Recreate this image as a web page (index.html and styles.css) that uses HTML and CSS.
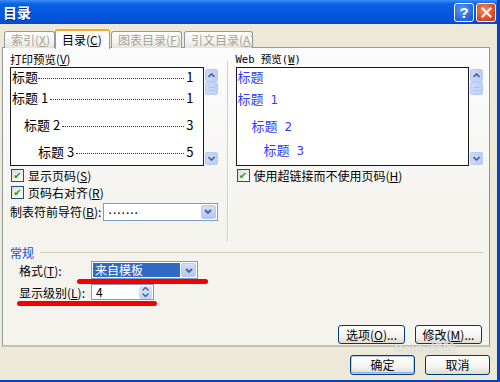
FILE: index.html
```html
<!DOCTYPE html>
<html lang="zh-CN">
<head>
  <meta charset="UTF-8">
  <title>目录</title>
  <link rel="stylesheet" href="styles.css">
</head>
<body>
  <div class="ventana">
    <div class="titulo">
      <span class="titulo-texto">目录</span>
      <div class="botones-titulo">
        <span class="btn-cap ayuda">?</span>
        <span class="btn-cap cerrar">
          <svg width="11" height="11" viewBox="0 0 11 11"><path d="M1.5 1.5 L9.5 9.5 M9.5 1.5 L1.5 9.5" stroke="#fff" stroke-width="2.2" stroke-linecap="square"/></svg>
        </span>
      </div>
    </div>

    <div class="cliente">
      <div class="pestanas">
        <span class="pestana">索引(<u>X</u>)</span>
        <span class="pestana activa">目录(<u>C</u>)</span>
        <span class="pestana">图表目录(<u>F</u>)</span>
        <span class="pestana">引文目录(<u>A</u>)</span>
      </div>

      <div class="panel">
        <div class="columnas">
          <div class="col izq">
            <div class="etiqueta">打印预览(<u>V</u>)</div>
            <div class="vista">
              <div class="caja impresion">
                <div class="linea n0"><span>标题</span><i></i><span>1</span></div>
                <div class="linea n1"><span>标题 1</span><i></i><span>1</span></div>
                <div class="linea n2"><span>标题 2</span><i></i><span>3</span></div>
                <div class="linea n3"><span>标题 3</span><i></i><span>5</span></div>
              </div>
              <div class="scroll">
                <span class="flecha"><svg width="7" height="5" viewBox="0 0 7 5"><path d="M0.5 4 L3.5 1 L6.5 4" fill="none" stroke="#4d6185" stroke-width="1.6"/></svg></span>
                <span class="pulgar"></span>
                <span class="hueco"></span>
                <span class="flecha"><svg width="7" height="5" viewBox="0 0 7 5"><path d="M0.5 1 L3.5 4 L6.5 1" fill="none" stroke="#4d6185" stroke-width="1.6"/></svg></span>
              </div>
            </div>
            <label class="check"><span class="cuadro">✔</span><span>显示页码(<u>S</u>)</span></label>
            <label class="check"><span class="cuadro">✔</span><span>页码右对齐(<u>R</u>)</span></label>
            <div class="fila-guia">
              <span>制表符前导符(<u>B</u>):</span>
              <div class="combo guia">
                <span class="valor">.......</span>
                <span class="boton-combo"><svg width="8" height="5" viewBox="0 0 8 5"><path d="M1 1 L4 4 L7 1" fill="none" stroke="#4d6185" stroke-width="1.8"/></svg></span>
              </div>
            </div>
          </div>

          <div class="separador"></div>

          <div class="col der">
            <div class="etiqueta web">Web 预览(<u>W</u>)</div>
            <div class="vista">
              <div class="caja web-caja">
                <div class="enlace n0">标题</div>
                <div class="enlace n1">标题 <b>1</b></div>
                <div class="enlace n2">标题 <b>2</b></div>
                <div class="enlace n3">标题 <b>3</b></div>
              </div>
              <div class="scroll">
                <span class="flecha"><svg width="7" height="5" viewBox="0 0 7 5"><path d="M0.5 4 L3.5 1 L6.5 4" fill="none" stroke="#4d6185" stroke-width="1.6"/></svg></span>
                <span class="pulgar"></span>
                <span class="hueco"></span>
                <span class="flecha"><svg width="7" height="5" viewBox="0 0 7 5"><path d="M0.5 1 L3.5 4 L6.5 1" fill="none" stroke="#4d6185" stroke-width="1.6"/></svg></span>
              </div>
            </div>
            <label class="check"><span class="cuadro">✔</span><span>使用超链接而不使用页码(<u>H</u>)</span></label>
          </div>
        </div>

        <div class="grupo">
          <div class="grupo-titulo"><span>常规</span><i></i></div>
          <div class="fila-grupo">
            <span class="rotulo">格式(<u>T</u>):</span>
            <div class="combo formato">
              <span class="valor sel">来自模板</span>
              <span class="boton-combo"><svg width="8" height="5" viewBox="0 0 8 5"><path d="M1 1 L4 4 L7 1" fill="none" stroke="#4d6185" stroke-width="1.8"/></svg></span>
            </div>
          </div>
          <div class="fila-grupo">
            <span class="rotulo">显示级别(<u>L</u>):</span>
            <div class="combo nivel">
              <span class="valor">4</span>
              <span class="giro">
                <svg width="7" height="4" viewBox="0 0 7 4"><path d="M0.5 3.5 L3.5 0.5 L6.5 3.5" fill="none" stroke="#4d6185" stroke-width="1.4"/></svg>
                <svg width="7" height="4" viewBox="0 0 7 4"><path d="M0.5 0.5 L3.5 3.5 L6.5 0.5" fill="none" stroke="#4d6185" stroke-width="1.4"/></svg>
              </span>
            </div>
          </div>
          <span class="raya r1"></span>
          <span class="raya r2"></span>
        </div>

        <div class="botones-panel">
          <button class="btn">选项(<u>O</u>)...</button>
          <button class="btn">修改(<u>M</u>)...</button>
        </div>
      </div>

      <div class="botones-dialogo">
        <button class="btn def">确定</button>
        <button class="btn">取消</button>
      </div>

      <div class="marca">Baidu经验</div>
    </div>
  </div>
</body>
</html>
```

FILE: styles.css
```css
* {
  margin: 0;
  padding: 0;
  box-sizing: border-box;
}

body {
  width: 500px;
  height: 382px;
  overflow: hidden;
  background: #ece9d8;
  font-family: "Noto Sans CJK SC", "DejaVu Sans", sans-serif;
  font-size: 12px;
  color: #000;
}

u {
  text-decoration: underline;
}

.ventana {
  width: 500px;
  height: 382px;
  display: flex;
  flex-direction: column;
  border-right: 3px solid #0842c4;
  border-bottom: 2px solid #0842c4;
  background: #ece9d8;
}

/* barra de titulo */
.titulo {
  height: 24px;
  flex: none;
  display: flex;
  align-items: center;
  justify-content: space-between;
  padding: 0 1px 0 3px;
  background: linear-gradient(#3d8ef7 0, #0b61e4 4px, #0556de 14px, #0553d9 20px, #0a48c6 24px);
}

.titulo-texto {
  color: #fff;
  font-weight: bold;
  font-size: 14px;
  line-height: 16px;
  text-shadow: 1px 1px 0 #0a2e85;
}

.botones-titulo {
  display: flex;
  gap: 2px;
}

.btn-cap {
  width: 20px;
  height: 19px;
  border: 1px solid #fff;
  border-radius: 3px;
  display: flex;
  align-items: center;
  justify-content: center;
  color: #fff;
  font-family: "Liberation Sans", sans-serif;
  font-weight: bold;
  font-size: 15px;
}

.ayuda {
  background: radial-gradient(circle at 40% 35%, #5b9bff, #2462e0 70%, #1b4fc8);
}

.cerrar {
  background: radial-gradient(circle at 40% 35%, #f08a63, #d9441c 70%, #c23a14);
}

/* area cliente */
.cliente {
  flex: 1;
  position: relative;
  padding: 5px 7px 0 2px;
  display: flex;
  flex-direction: column;
}

.pestanas {
  height: 19px;
  display: flex;
  align-items: flex-end;
  padding-left: 2px;
  position: relative;
  z-index: 2;
}

.pestana {
  height: 17px;
  padding: 0 6px;
  margin-right: 2px;
  border: 1px solid #919b9c;
  border-bottom: none;
  border-radius: 3px 3px 0 0;
  background: linear-gradient(#fff, #f0efea 70%, #e4e2da);
  color: #a6a59a;
  line-height: 16px;
  white-space: nowrap;
}

.pestana:nth-child(1) { width: 51px; }
.pestana:nth-child(3) { width: 71px; }
.pestana:nth-child(4) { width: 69px; }

.pestana.activa {
  height: 20px;
  width: 55px;
  margin: 0 1px 0 -2px;
  color: #000;
  background: #fcfcfe;
  border-top: 2px solid #f6a72a;
  line-height: 17px;
  margin-bottom: -1px;
}

.panel {
  height: 300px;
  margin-top: -1px;
  border: 1px solid #919b9c;
  border-right-color: #8c9596;
  border-bottom: 2px solid #c3c1b4;
  background: linear-gradient(#fcfcfe, #f4f3ee 60%);
  padding: 5px 6px 0 7px;
  display: flex;
  flex-direction: column;
  position: relative;
}

.columnas {
  display: flex;
  height: 192px;
}

.col {
  display: flex;
  flex-direction: column;
}

.izq {
  width: 208px;
}

.der {
  width: 248px;
}

.separador {
  width: 2px;
  margin: 8px 7px 4px 9px;
  border-left: 1px solid #d0d0bf;
  border-right: 1px solid #fff;
}

.etiqueta {
  height: 14px;
  line-height: 13px;
  font-size: 11.5px;
}

.etiqueta.web {
  font-family: "DejaVu Sans Mono", "Noto Sans CJK SC", monospace;
  font-size: 10.5px;
}

.vista {
  display: flex;
  gap: 1px;
  height: 99px;
}

.caja {
  flex: 1;
  border: 1px solid #1a1a1a;
  background: #fff;
  overflow: hidden;
  padding-top: 1px;
}

.scroll {
  width: 13px;
  display: flex;
  flex-direction: column;
  padding: 2px 0 1px;
}

.flecha,
.pulgar {
  height: 13px;
  flex: none;
  border: 1px solid #b8cbf2;
  border-radius: 2px;
  background: linear-gradient(90deg, #cbd9f8, #b9cdf6);
  display: flex;
  align-items: center;
  justify-content: center;
}

.pulgar {
  background: repeating-linear-gradient(#c7d7f9 0 2px, #a9bff0 2px 3px) center / 5px 7px no-repeat, linear-gradient(90deg, #cbd9f8, #bccff6);
}

.hueco {
  flex: 1;
}

/* vista de impresion */
.linea {
  display: flex;
  align-items: baseline;
  height: 27px;
  font-size: 13px;
  line-height: 16px;
  padding: 0 9px 0 1px;
  white-space: nowrap;
}

.linea:first-child {
  height: 21px;
}

.linea i {
  flex: 1;
  border-bottom: 1.5px dotted #333;
  margin: 0 2px;
  transform: translateY(-3px);
}

.linea.n2 { padding-left: 13px; }
.linea.n3 { padding-left: 27px; }
.linea.n0 i { margin-left: 0; }

/* vista web */
.enlace {
  color: #3a3aff;
  font-size: 13px;
  line-height: 16px;
  height: 27px;
  white-space: nowrap;
  padding-left: 1px;
}

.enlace:first-child { height: 22px; }
.enlace.n2 { padding-left: 15px; height: 24px; }
.enlace.n3 { padding-left: 27px; }

.enlace b {
  font-weight: normal;
  font-family: "DejaVu Sans", sans-serif;
  font-size: 12px;
  margin-left: 4px;
}

/* casillas */
.check {
  display: flex;
  align-items: center;
  height: 17px;
  gap: 4px;
  padding-left: 1px;
  white-space: nowrap;
}

.check:first-of-type {
  margin-top: 1px;
}

.cuadro {
  width: 13px;
  height: 13px;
  border: 1px solid #1c5180;
  background: linear-gradient(135deg, #dcdcd7, #fff);
  color: #21a121;
  font-size: 10px;
  line-height: 11px;
  text-align: center;
  font-family: "DejaVu Sans", sans-serif;
  font-weight: bold;
}

.fila-guia {
  display: flex;
  align-items: center;
  justify-content: space-between;
  margin-top: 1px;
  height: 19px;
}

.combo {
  height: 18px;
  border: 1px solid #7f9db9;
  background: #fff;
  display: flex;
  align-items: center;
  padding: 1px;
}

.combo.guia {
  width: 115px;
}

.valor {
  flex: 1;
  padding-left: 3px;
  line-height: 14px;
}

.guia .valor {
  letter-spacing: 1px;
  padding-left: 4px;
  transform: translateY(-3px);
}

.boton-combo {
  width: 15px;
  height: 14px;
  border-radius: 2px;
  border: 1px solid #b7cbf5;
  background: linear-gradient(#d2dffb, #b1c8f7);
  display: flex;
  align-items: center;
  justify-content: center;
}

/* grupo general */
.grupo {
  position: relative;
  padding-left: 9px;
}

.grupo-titulo {
  display: flex;
  align-items: center;
  height: 14px;
  color: #1b50d0;
  margin-left: -9px;
  gap: 6px;
}

.grupo-titulo i {
  flex: 1;
  border-top: 1px solid #d0d0bf;
}

.fila-grupo {
  display: flex;
  align-items: center;
  height: 22px;
}

.rotulo {
  width: 72px;
  white-space: nowrap;
}

.combo.formato {
  width: 107px;
}

.valor.sel {
  background: #316ac5;
  color: #fff;
  margin-right: 1px;
  padding-left: 2px;
}

.combo.nivel {
  width: 63px;
  height: 16px;
  padding: 0 1px;
}

.giro {
  width: 13px;
  height: 13px;
  display: flex;
  flex-direction: column;
  align-items: center;
  justify-content: space-around;
  background: linear-gradient(#d9e4fc, #c1d3f8);
  border-radius: 2px;
}

/* marcas rojas sobre la captura */
.raya {
  position: absolute;
  height: 5px;
  border-radius: 3px;
  background: #f40000;
}

.raya.r1 {
  left: 67px;
  top: 34px;
  width: 131px;
}

.raya.r2 {
  left: 7px;
  top: 56px;
  width: 140px;
}

.botones-panel {
  display: flex;
  justify-content: flex-end;
  gap: 10px;
  margin-top: 22px;
  padding-right: 1px;
}

.btn {
  font-family: "Noto Sans CJK SC", "DejaVu Sans", sans-serif;
  font-size: 12px;
  height: 19px;
  width: 67px;
  border: 1px solid #003c74;
  border-radius: 3px;
  background: linear-gradient(#fff, #f3f3ef 60%, #dedcd2);
  color: #000;
  line-height: 16px;
}

.botones-dialogo {
  display: flex;
  justify-content: flex-end;
  gap: 10px;
  margin-top: 8px;
}

.btn.def {
  width: 64px;
  box-shadow: inset 0 0 0 1px #b6cdf5, inset 0 -1px 0 1px #8fb2ef;
}

.botones-dialogo .btn {
  height: 20px;
  width: 65px;
}

.marca {
  position: absolute;
  left: 394px;
  top: 319px;
  line-height: 12px;
  color: rgba(255, 255, 255, 0.6);
  font-family: "Liberation Sans", "Noto Sans CJK SC", sans-serif;
  font-size: 13px;
  font-weight: bold;
  text-shadow: 0 0 1px rgba(150, 150, 150, 0.5);
  pointer-events: none;
  white-space: nowrap;
}
```
